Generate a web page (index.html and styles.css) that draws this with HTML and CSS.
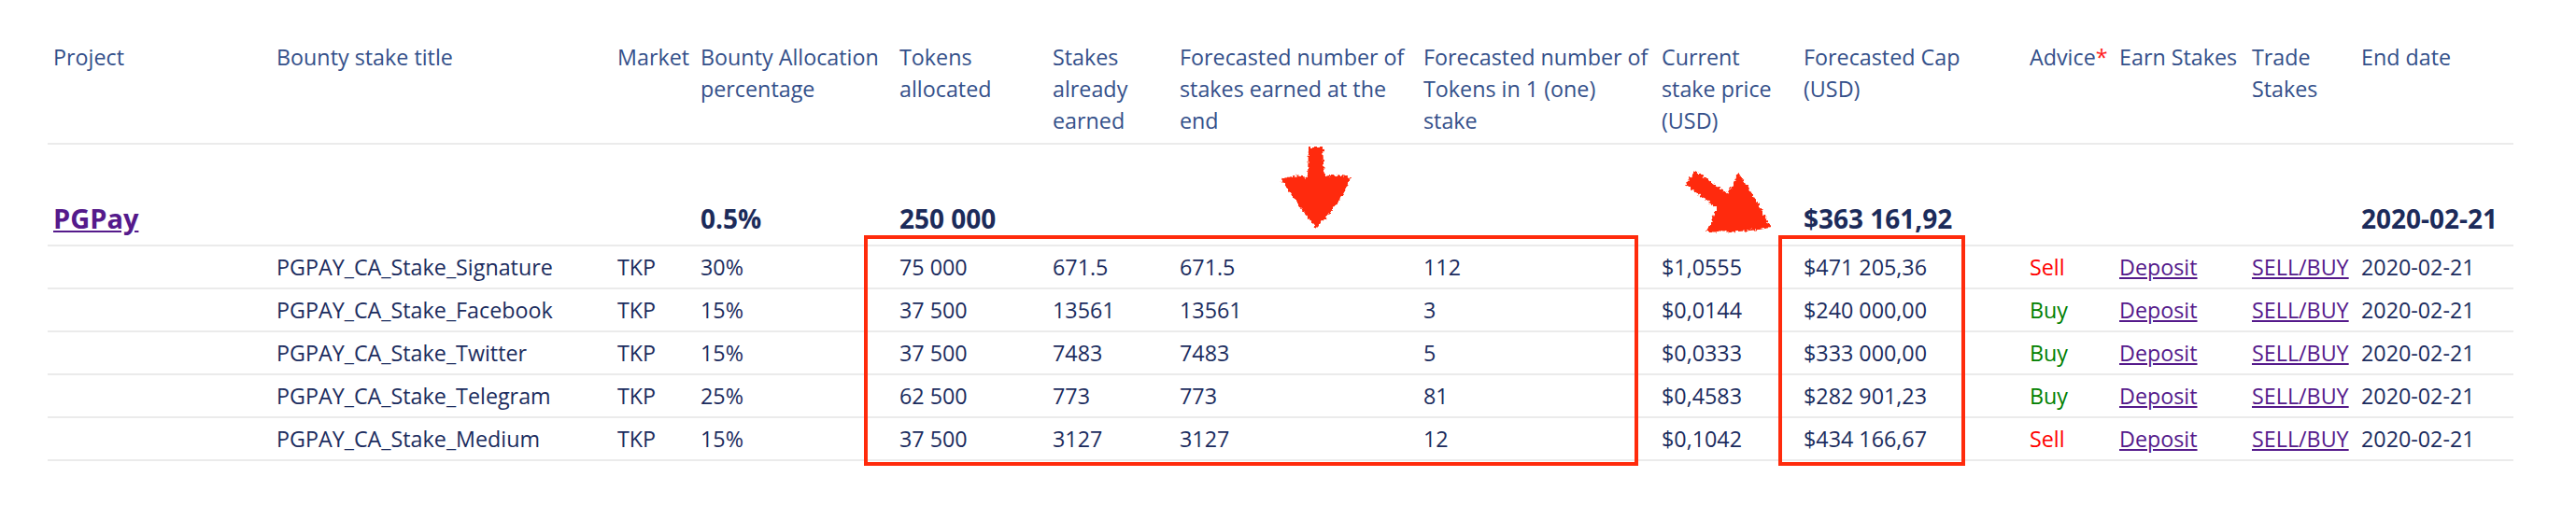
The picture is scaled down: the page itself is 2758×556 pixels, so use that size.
FILE: index.html
```html
<!DOCTYPE html>
<html lang="en">
<head>
<meta charset="utf-8">
<title>Bounty stakes</title>
<link rel="stylesheet" href="styles.css">
</head>
<body>
<div class="page">
  <table class="stakes">
    <colgroup>
      <col class="w-project"><col class="w-title"><col class="w-market"><col class="w-alloc">
      <col class="w-tokens"><col class="w-earned"><col class="w-fc-stakes"><col class="w-fc-tokens">
      <col class="w-price"><col class="w-cap"><col class="w-advice"><col class="w-earn">
      <col class="w-trade"><col class="w-end">
    </colgroup>
    <thead>
      <tr>
        <th>Project</th>
        <th>Bounty stake title</th>
        <th>Market</th>
        <th>Bounty Allocation<br>percentage</th>
        <th>Tokens<br>allocated</th>
        <th>Stakes<br>already<br>earned</th>
        <th>Forecasted number of<br>stakes earned at the<br>end</th>
        <th>Forecasted number of<br>Tokens in 1 (one)<br>stake</th>
        <th>Current<br>stake price<br>(USD)</th>
        <th>Forecasted Cap<br>(USD)</th>
        <th>Advice<span class="req">*</span></th>
        <th>Earn Stakes</th>
        <th>Trade<br>Stakes</th>
        <th>End date</th>
      </tr>
    </thead>
    <tbody>
      <tr class="project-row">
        <td><a class="link project-link" href="#">PGPay</a></td>
        <td></td><td></td>
        <td>0.5%</td>
        <td>250 000</td>
        <td></td><td></td><td></td><td></td>
        <td>$363 161,92</td>
        <td></td><td></td><td></td>
        <td>2020-02-21</td>
      </tr>
      <tr>
        <td></td><td>PGPAY_CA_Stake_Signature</td><td>TKP</td><td>30%</td>
        <td>75 000</td><td>671.5</td><td>671.5</td><td>112</td>
        <td>$1,0555</td><td>$471 205,36</td><td class="sell">Sell</td>
        <td><a class="link" href="#">Deposit</a></td><td><a class="link" href="#">SELL/BUY</a></td><td>2020-02-21</td>
      </tr>
      <tr>
        <td></td><td>PGPAY_CA_Stake_Facebook</td><td>TKP</td><td>15%</td>
        <td>37 500</td><td>13561</td><td>13561</td><td>3</td>
        <td>$0,0144</td><td>$240 000,00</td><td class="buy">Buy</td>
        <td><a class="link" href="#">Deposit</a></td><td><a class="link" href="#">SELL/BUY</a></td><td>2020-02-21</td>
      </tr>
      <tr>
        <td></td><td>PGPAY_CA_Stake_Twitter</td><td>TKP</td><td>15%</td>
        <td>37 500</td><td>7483</td><td>7483</td><td>5</td>
        <td>$0,0333</td><td>$333 000,00</td><td class="buy">Buy</td>
        <td><a class="link" href="#">Deposit</a></td><td><a class="link" href="#">SELL/BUY</a></td><td>2020-02-21</td>
      </tr>
      <tr>
        <td></td><td>PGPAY_CA_Stake_Telegram</td><td>TKP</td><td>25%</td>
        <td>62 500</td><td>773</td><td>773</td><td>81</td>
        <td>$0,4583</td><td>$282 901,23</td><td class="buy">Buy</td>
        <td><a class="link" href="#">Deposit</a></td><td><a class="link" href="#">SELL/BUY</a></td><td>2020-02-21</td>
      </tr>
      <tr>
        <td></td><td>PGPAY_CA_Stake_Medium</td><td>TKP</td><td>15%</td>
        <td>37 500</td><td>3127</td><td>3127</td><td>12</td>
        <td>$0,1042</td><td>$434 166,67</td><td class="sell">Sell</td>
        <td><a class="link" href="#">Deposit</a></td><td><a class="link" href="#">SELL/BUY</a></td><td>2020-02-21</td>
      </tr>
    </tbody>
  </table>

  <div class="mark mark-middle"></div>
  <div class="mark mark-cap"></div>

  <svg class="arrows" width="2758" height="556" viewBox="0 0 2758 556" aria-hidden="true">
    <defs>
      <filter id="rough" x="-10%" y="-10%" width="120%" height="120%">
        <feTurbulence type="fractalNoise" baseFrequency="0.3" numOctaves="2" seed="4" result="noise"/>
        <feDisplacementMap in="SourceGraphic" in2="noise" scale="6" xChannelSelector="R" yChannelSelector="G"/>
      </filter>
    </defs>
    <path class="arrow" d="M1401 158 L1416 158 L1418 189 Q1432 186 1446 190 Q1438 216 1409 244 Q1386 216 1372 192 Q1386 186 1400 190 Z"/>
    <path class="arrow" d="M1815 183 L1850 208 L1861 185 Q1884 218 1896 244 Q1860 250 1827 248 L1838 223 L1804 197 Z"/>
  </svg>
</div>
</body>
</html>
```

FILE: styles.css
```css
* {
  box-sizing: border-box;
}

html, body {
  margin: 0;
  background: #ffffff;
}

body {
  font-family: "Open Sans", "Noto Sans", sans-serif;
}

.page {
  position: relative;
  width: 2758px;
  height: 556px;
  padding: 39px 0 0 51px;
  overflow: hidden;
}

.stakes {
  border-collapse: separate;
  border-spacing: 0;
  table-layout: fixed;
  width: 2640px;
  font-size: 23.3px;
  line-height: 34px;
  color: #1b2c5e;
}

.w-project { width: 239px; }
.w-title { width: 365px; }
.w-market { width: 89px; }
.w-alloc { width: 213px; }
.w-tokens { width: 164px; }
.w-earned { width: 136px; }
.w-fc-stakes { width: 261px; }
.w-fc-tokens { width: 255px; }
.w-price { width: 152px; }
.w-cap { width: 242px; }
.w-advice { width: 96px; }
.w-earn { width: 142px; }
.w-trade { width: 117px; }
.w-end { width: 169px; }

.stakes th {
  font-weight: 400;
  text-align: left;
  vertical-align: top;
  color: #34508a;
  padding: 5px 0 7px 6px;
  white-space: nowrap;
  border-bottom: 2px solid #ebebeb;
}

.stakes td {
  text-align: left;
  vertical-align: baseline;
  padding: 5px 0 5px 6px;
  white-space: nowrap;
  border-bottom: 2px solid #ebebeb;
}

.stakes .project-row td {
  padding: 62px 0 11px 6px;
  font-size: 28px;
  font-weight: 700;
  color: #1c2b5a;
}

.req {
  color: #ff1a1a;
}

.link {
  color: #551a8b;
  text-decoration: underline;
}

.project-link {
  font-size: 29px;
}

.sell {
  color: #ff0000;
}

.buy {
  color: #008000;
}

.mark {
  position: absolute;
  border: 4px solid #ff2b0c;
}

.mark-middle {
  left: 925px;
  top: 252px;
  width: 829px;
  height: 247px;
}

.mark-cap {
  left: 1904px;
  top: 252px;
  width: 200px;
  height: 247px;
}

.arrows {
  position: absolute;
  left: 0;
  top: 0;
  pointer-events: none;
}

.arrow {
  fill: #ff2b0c;
  filter: url(#rough);
}
```
